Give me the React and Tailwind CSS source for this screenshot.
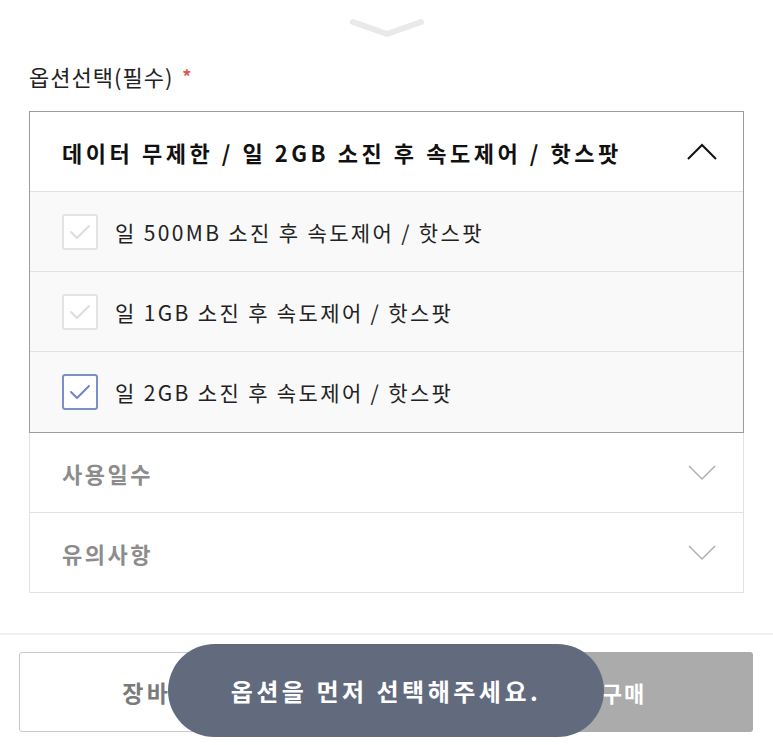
import React from "react";

const FONT = { fontFamily: '"Noto Sans CJK KR", "Noto Sans", sans-serif' };

function Check({ checked }) {
  return (
    <div
      className={
        "w-[36px] h-[36px] shrink-0 rounded-[3px] border-2 bg-white flex items-center justify-center " +
        (checked ? "border-[#7c8fcd]" : "border-[#e3e3e3]")
      }
    >
      <svg width="22" height="16" viewBox="0 0 22 16" fill="none">
        <polyline
          points="2,8 8,14 20,2"
          stroke={checked ? "#6f85c8" : "#dedede"}
          strokeWidth="2"
          strokeLinecap="round"
          strokeLinejoin="round"
        />
      </svg>
    </div>
  );
}

function OptionRow({ text, checked, last }) {
  return (
    <div
      className={
        "h-[80px] flex items-center pl-[32px] gap-[17px] bg-[#f9f9f9] " +
        (last ? "" : "border-b border-[#e2e2e2]")
      }
    >
      <Check checked={checked} />
      <span className="text-[21px] leading-[28px] text-[#222] tracking-[2.35px]">{text}</span>
    </div>
  );
}

function Collapsed({ title }) {
  return (
    <div className="h-[80px] border-x border-b border-[#e2e2e2] flex items-center justify-between pl-[32px] pr-[27px]">
      <span className="text-[22px] leading-[28px] font-bold text-[#8c8c8c] tracking-[2.5px]">{title}</span>
      <svg width="28" height="16" viewBox="0 0 28 16" fill="none">
        <polyline points="1,1 14,14 27,1" stroke="#b0b0b0" strokeWidth="1.5" />
      </svg>
    </div>
  );
}

export default function App() {
  return (
    <div className="w-[773px] h-[745px] bg-white relative overflow-hidden" style={FONT}>
      <div className="flex justify-center pt-[16px]">
        <svg width="80" height="24" viewBox="0 0 80 24" fill="none">
          <polyline
            points="6,6 40,18 74,6"
            stroke="#e9e9e9"
            strokeWidth="6"
            strokeLinecap="round"
            strokeLinejoin="round"
          />
        </svg>
      </div>

      <div className="mt-[22px] px-[29px] flex items-center">
        <span className="text-[22px] leading-[28px] text-[#222] tracking-[1px]">옵션선택(필수)</span>
        <span className="ml-[9px] text-[18px] leading-[28px] text-[#e05a4f] font-bold">*</span>
      </div>

      <div className="mt-[21px] mx-[29px]">
        <div className="border border-[#9c9c9c]">
          <div className="h-[80px] border-b border-[#e2e2e2] bg-white flex items-center justify-between pl-[32px] pr-[26px]">
            <span className="text-[22px] leading-[28px] font-bold text-[#111] tracking-[3.55px] whitespace-nowrap">
              데이터 무제한 / 일 2GB 소진 후 속도제어 / 핫스팟
            </span>
            <svg width="30" height="17" viewBox="0 0 30 17" fill="none">
              <polyline points="1,16 15,2 29,16" stroke="#111" strokeWidth="2" />
            </svg>
          </div>
          <OptionRow text="일 500MB 소진 후 속도제어 / 핫스팟" />
          <OptionRow text="일 1GB 소진 후 속도제어 / 핫스팟" />
          <OptionRow text="일 2GB 소진 후 속도제어 / 핫스팟" checked last />
        </div>
        <Collapsed title="사용일수" />
        <Collapsed title="유의사항" />
      </div>

      <div className="mt-[40px] h-[2px] bg-[#efefef]" />

      <div className="pt-[17px] pl-[19px] pr-[20px] flex gap-[10px]">
        <div className="flex-1 h-[80px] rounded-[3px] border border-[#c9c9c9] bg-white flex items-center justify-center">
          <span className="text-[23px] font-bold text-[#7a7a7a] tracking-[3.5px]">장바구니 담기</span>
        </div>
        <div className="flex-1 h-[80px] rounded-[3px] bg-[#ababab] flex items-center justify-center">
          <span className="text-[22px] font-bold text-white tracking-[2px]">지금 바로 구매</span>
        </div>
      </div>

      <div className="absolute left-[168px] top-[644px] w-[436px] h-[93px] rounded-full bg-[#626a7e] flex items-center justify-center">
        <span className="text-[24px] font-bold text-white tracking-[3.5px]">옵션을 먼저 선택해주세요.</span>
      </div>
    </div>
  );
}
